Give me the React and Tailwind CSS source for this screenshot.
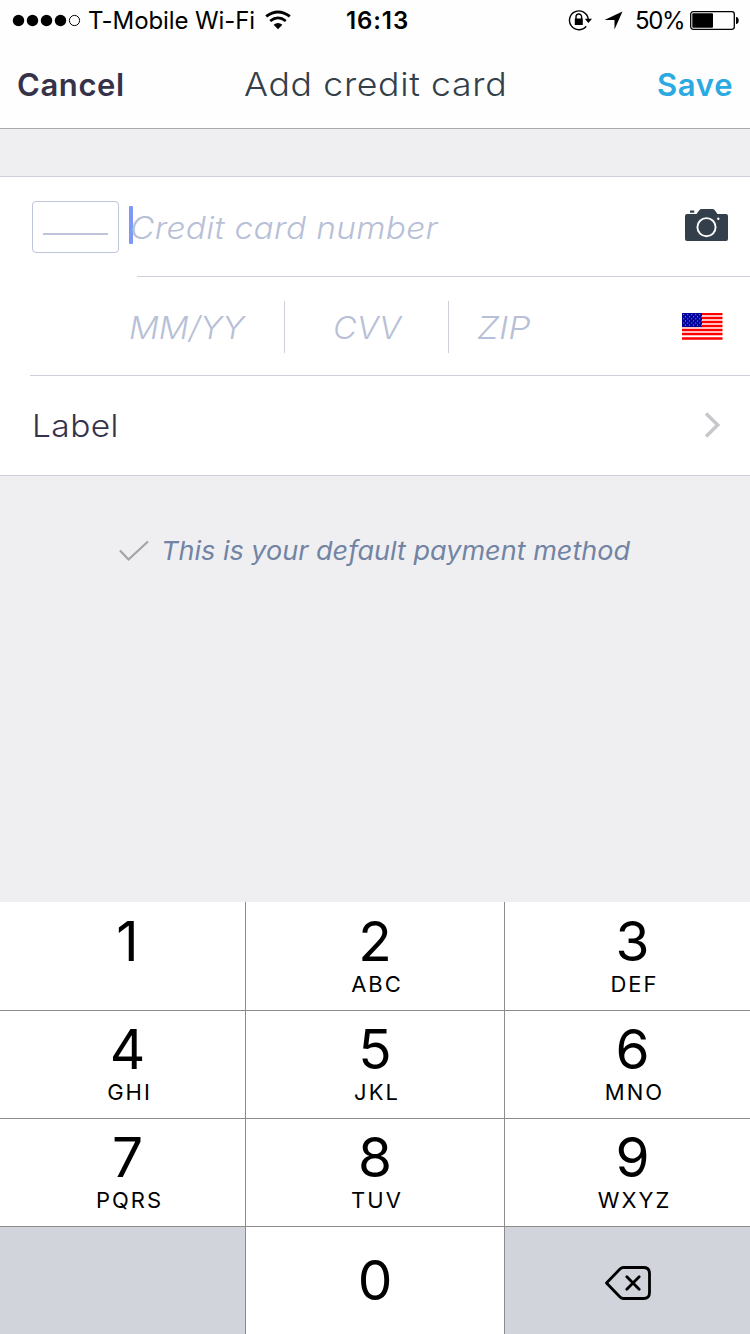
import React from 'react';

const keys = [
  ['1', ''], ['2', 'ABC'], ['3', 'DEF'],
  ['4', 'GHI'], ['5', 'JKL'], ['6', 'MNO'],
  ['7', 'PQRS'], ['8', 'TUV'], ['9', 'WXYZ'],
];

function StatusBar() {
  return (
    <div className="flex h-10 items-center text-black">
      <svg className="ml-3 h-4 w-[70px] shrink-0" viewBox="0 0 70 16">
        <circle cx="6.5" cy="8.5" r="5.7" />
        <circle cx="20.5" cy="8.5" r="5.7" />
        <circle cx="34.5" cy="8.5" r="5.7" />
        <circle cx="48.5" cy="8.5" r="5.7" />
        <circle cx="62.5" cy="8.5" r="5.1" fill="none" stroke="black" />
      </svg>
      <div className="ml-[6px] w-[177px] pt-[2px] text-[24px] tracking-[-0.1px] whitespace-nowrap">T-Mobile Wi-Fi</div>
      <svg className="h-5 w-[26px] shrink-0" viewBox="0 0 26 20" fill="none" stroke="black">
        <path d="M1.2 6.4Q13 -2.6 24.8 6.4" strokeWidth="2.9" />
        <path d="M5.2 11Q13 4.8 20.8 11" strokeWidth="2.8" />
        <path d="M8.6 14.8Q13 11 17.4 14.8L13 19.2Z" fill="black" stroke="none" />
      </svg>
      <div className="ml-[55px] w-[222px] pt-[2px] text-[24px] font-semibold tracking-[0.9px] whitespace-nowrap">16:13</div>
      <svg className="h-6 w-6 shrink-0" viewBox="0 0 24 24" fill="none" stroke="black">
        <path d="M18.2 18.2A9.4 9.4 0 1 1 20.2 11" strokeWidth="1.4" />
        <path d="M16.800 10.800h7.200l-3.600 4.200Z" fill="black" stroke="none" />
        <path d="M6.800 10.500h8v6.500h-8Z" fill="black" stroke="none" />
        <path d="M8 11V8.800a2.800 2.800 0 0 1 5.600 0v2.200" strokeWidth="1.4" />
      </svg>
      <svg className="ml-3 h-5 w-5 shrink-0" viewBox="0 0 20 20">
        <path d="M18.500 1.500L10.500 19.500V10H0.500Z" />
      </svg>
      <div className="ml-[11px] w-[55px] pt-[2px] text-[24px] tracking-[-1.4px] whitespace-nowrap">50%</div>
      <svg className="h-5 w-[50px] shrink-0" viewBox="0 0 50 20">
        <rect x="0.700" y="1.700" width="43.600" height="17.600" rx="2.500" fill="none" stroke="black" strokeWidth="1.300" />
        <rect x="2.300" y="3.300" width="20.700" height="14.400" rx="1" />
        <path d="M46 7Q48.700 7.400 48.700 10.500T46 14Z" />
      </svg>
    </div>
  );
}

function CameraIcon() {
  return (
    <svg className="mb-1 h-8 w-[43px] shrink-0" viewBox="0 0 43 32">
      <path d="M5 1.5h4.3v2.2H5Z" fill="#333f4a" />
      <path d="M2 5h9.5l3-4Q15.300 0 16.500 0H27.500Q28.800 0 29.600 1L32.500 5H41Q43 5 43 7V30Q43 32 41 32H2Q0 32 0 30V7Q0 5 2 5Z" fill="#333f4a" />
      <circle cx="21.500" cy="18.200" r="9.100" fill="none" stroke="white" strokeWidth="1.900" />
      <circle cx="33.300" cy="9.700" r="1.200" fill="white" />
    </svg>
  );
}

function Flag() {
  const stars = [];
  for (let r = 0; r < 6; r++) {
    for (let c = 0; c < 5; c++) {
      stars.push(<rect key={r + '-' + c} x={1.3 + c * 4 + (r % 2) * 1.8} y={1.2 + r * 2.1} width="0.9" height="0.9" />);
    }
  }
  return (
    <svg className="h-[27px] w-[41px] shrink-0" viewBox="0 0 41 27">
      <rect width="40.500" height="27" fill="white" />
      <path d="M0 1H40.500M0 5H40.500M0 9H40.500M0 13H40.500M0 17H40.500M0 21H40.500M0 25.500H40.500" stroke="#ff0000" strokeWidth="2.300" />
      <rect width="20" height="14" fill="#00009c" />
      <g fill="#b9b9ea">{stars}</g>
    </svg>
  );
}

export default function App() {
  return (
    <div className="flex h-[1334px] w-[750px] flex-col overflow-hidden bg-[#efeff1] font-['Inter','Liberation_Sans',sans-serif]">
      <header className="flex h-[129px] flex-col border-b border-[#a8a8ac] bg-[#fefefe]">
        <StatusBar />
        <div className="flex h-[89px] items-center pt-[2px] text-[31px] whitespace-nowrap">
          <div className="w-[227px] pl-[17px] font-semibold text-[#35324a]">
            <span className="inline-block origin-left tracking-[0.6px]">Cancel</span>
          </div>
          <div className="w-[413px] pl-[17px] text-[33px] font-[350] text-[#333f4a]">
            <span className="inline-block origin-left scale-x-108 tracking-[0.6px]">Add credit card</span>
          </div>
          <div className="pl-[17px] font-semibold text-[#2ba9e1]">
            <span className="inline-block origin-left tracking-[0.7px]">Save</span>
          </div>
        </div>
      </header>

      <main className="mt-[47px] h-[300px] border-y border-[#cdcfdc] bg-white text-[31px] font-[350] whitespace-nowrap">
        <div className="flex h-[99px] items-center pr-[22px] pl-8">
          <div className="mt-[1px] flex h-[52px] w-[87px] justify-center rounded-[4px] border border-[#bec5da] pt-[31px]">
            <div className="h-[2px] w-[65px] bg-[#bec5da]" />
          </div>
          <div className="mb-[4px] ml-[10px] h-[38px] w-1 rounded-[1px] bg-[#7d98f7]" />
          <div className="-ml-[3px] flex-1 pt-[3px] text-[#b8c0d7] italic">
            <span className="inline-block origin-left scale-x-108 tracking-[0.3px]">Credit card number</span>
          </div>
          <CameraIcon />
        </div>
        <div className="ml-[137px] h-px bg-[#cdcfdc]" />
        <div className="flex h-[98px] items-center pr-[27px] pl-[129px] text-[#b8c0d7] italic">
          <div className="w-[155px] pt-1"><span className="inline-block origin-left scale-x-107">MM/YY</span></div>
          <div className="mt-[2px] h-[52px] w-px bg-[#cdcfdc]" />
          <div className="w-[163px] pt-1 pl-[48px]"><span className="inline-block origin-left scale-x-105">CVV</span></div>
          <div className="mt-[2px] h-[52px] w-px bg-[#cdcfdc]" />
          <div className="flex-1 pt-1 pl-[28px]"><span className="inline-block origin-left scale-x-114">ZIP</span></div>
          <Flag />
        </div>
        <div className="ml-[30px] h-px bg-[#cdcfdc]" />
        <div className="flex h-[99px] items-center justify-between pr-[29px] pl-8 text-[#35324a]">
          <div className="pt-[2px]"><span className="inline-block origin-left scale-x-108 tracking-[0.4px]">Label</span></div>
          <svg className="mb-[1px] h-[26px] w-4" viewBox="0 0 16 26" fill="none" stroke="#c7c7cc" strokeWidth="3.500">
            <path d="M1 1.500L12.700 13L1 24.500" />
          </svg>
        </div>
      </main>

      <section className="flex h-[426px] items-start pt-[57px] pl-[119px]">
        <svg className="mt-[7px] h-[22px] w-[30px]" viewBox="0 0 30 22" fill="none" stroke="#a1a5a8" strokeWidth="2.200">
          <path d="M1 10.500L9.500 19.500L29 1.500" />
        </svg>
        <div className="ml-[12px] text-[26px] leading-9 text-[#7284a4] italic whitespace-nowrap">
          <span className="inline-block origin-left scale-x-104">This is your default payment method</span>
        </div>
      </section>

      <div className="grid h-[432px] grid-cols-[245px_258px_245px] grid-rows-[109px_108px_108px_107px] gap-x-px bg-[#8c8c8c] text-black">
        {keys.map(([digit, letters]) => (
          <div key={digit} className="flex flex-col items-center border-b border-[#8c8c8c] bg-white pt-[9px] nth-[-n+3]:pt-[10px] nth-[3n+1]:pl-[10px] nth-[3n]:pl-[10px]">
            <div className="h-[60px] text-[55px] leading-[59px]">{digit}</div>
            <div className="h-6 pl-[4px] text-[22px] leading-6 tracking-[2px]">{letters}</div>
          </div>
        ))}
        <div className="bg-[#d1d4da]" />
        <div className="flex justify-center bg-white pt-[23px] text-[55px] leading-[60px]">0</div>
        <div className="bg-[#d1d4da] pt-[39px] pl-[100px]">
          <svg className="h-[34px] w-[46px]" viewBox="0 0 46 34" fill="none" stroke="black" strokeWidth="2.800" strokeLinecap="round" strokeLinejoin="round">
            <path d="M18.500 1.500H38.500Q44.500 1.500 44.500 7.500V26.500Q44.500 32.500 38.500 32.500H18.500Q16.500 32.500 15 31L1.500 17L15 3Q16.500 1.500 18.500 1.500Z" />
            <path d="M21.800 10.800L34.200 23.200M34.200 10.800L21.800 23.200" />
          </svg>
        </div>
      </div>
    </div>
  );
}
